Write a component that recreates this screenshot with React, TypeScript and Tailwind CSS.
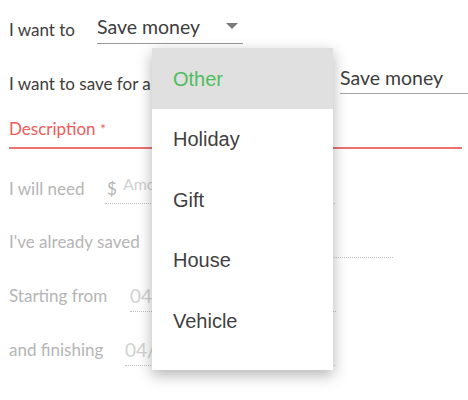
import React from 'react';

const options = ['Other', 'Holiday', 'Gift', 'House', 'Vehicle'];

function Label({ children, w, mb, muted }: { children: React.ReactNode; w: string; mb: string; muted?: boolean }) {
  return (
    <span className={`${w} ${mb} shrink-0 whitespace-nowrap text-[17px] leading-[24px] ${muted ? 'text-[#b5b5b5]' : 'text-[#3d3d3d]'}`}>
      {children}
    </span>
  );
}

export default function App() {
  return (
    <div className="relative w-[468px] h-[400px] bg-white overflow-hidden font-['Lato','Liberation_Sans',sans-serif]">
      <div className="pl-[9px]">
        {/* row 1 */}
        <div className="flex items-end h-[44px]">
          <Label w="w-[88px]" mb="mb-[2px]">I want to</Label>
          <div className="relative shrink-0 w-[146px] pb-[4px] border-b border-[#9a9a9a] text-[19.5px] leading-[24px] text-[#3d3d3d]">
            Save money
            <svg className="absolute right-[5px] top-[8px]" width="12" height="6" viewBox="0 0 12 6">
              <path d="M0 0 L12 0 L6 6 Z" fill="#7a7a7a" />
            </svg>
          </div>
        </div>

        {/* row 2 */}
        <div className="flex items-end h-[52px]">
          <Label w="w-[146px]" mb="mb-0">I want to save for a</Label>
          <div className="shrink-0 w-[175px] mb-[2px] pb-[3px] border-b border-[#9a9a9a] text-[19.5px] leading-[24px]">
            &nbsp;
          </div>
          <div className="ml-[10px] w-[140px] shrink-0 mb-[2px] pb-[3px] border-b border-[#a5a5a5] text-[19.5px] leading-[24px] text-[#3d3d3d] whitespace-nowrap">
            Save money
          </div>
        </div>

        {/* description */}
        <div className="flex items-end h-[53px]">
          <div className="w-[453px] pb-[6px] border-b-2 border-[#ee7171] text-[17px] leading-[24px] text-[#ef5b5b]">
            Description <span className="text-[14px] align-top">*</span>
          </div>
        </div>

        {/* amount */}
        <div className="flex items-end h-[55px]">
          <Label w="w-[96px]" mb="mb-[3px]" muted>I will need</Label>
          <div className="flex items-end shrink-0 w-[230px] pb-[2px] border-b border-dotted border-[#c4c4c4]">
            <span className="text-[17px] leading-[24px] text-[#b5b5b5] pl-[2px]">$</span>
            <span className="relative -top-[7px] ml-[6px] text-[16px] leading-[20px] text-[#d2d2d2]">Amount</span>
          </div>
        </div>

        {/* saved */}
        <div className="flex items-end h-[54px]">
          <Label w="w-[156px]" mb="mb-[4px]" muted>I've already saved</Label>
          <div className="shrink-0 w-[228px] pb-[3px] border-b border-dotted border-[#c4c4c4] text-[18px] leading-[24px] text-[#d2d2d2]">
            &nbsp;
          </div>
        </div>

        {/* start */}
        <div className="flex items-end h-[54px]">
          <Label w="w-[121px]" mb="mb-[4px]" muted>Starting from</Label>
          <div className="shrink-0 w-[206px] pb-[3px] border-b border-dotted border-[#c4c4c4] text-[19px] leading-[24px] text-[#d2d2d2]">
            04/2019
          </div>
        </div>

        {/* finish */}
        <div className="flex items-end h-[54px]">
          <Label w="w-[116px]" mb="mb-[4px]" muted>and finishing</Label>
          <div className="shrink-0 w-[210px] pb-[3px] border-b border-dotted border-[#c4c4c4] text-[19px] leading-[24px] text-[#d2d2d2]">
            04/2020
          </div>
        </div>
      </div>

      {/* open dropdown menu */}
      <div className="absolute left-[152px] top-[48px] w-[181px] pt-[1px] pb-[19px] bg-white shadow-[0_5px_14px_rgba(0,0,0,0.3)] font-['Liberation_Sans',Arial,sans-serif]">
        {options.map((o, i) => (
          <div
            key={o}
            className={`h-[60.5px] flex items-center pl-[21px] text-[20px] ${i === 0 ? '-mt-[1px] h-[61px] bg-[#e0e0e0] text-[#4fbd5e]' : 'text-[#3f3f3f]'}`}
          >
            {o}
          </div>
        ))}
      </div>
    </div>
  );
}
